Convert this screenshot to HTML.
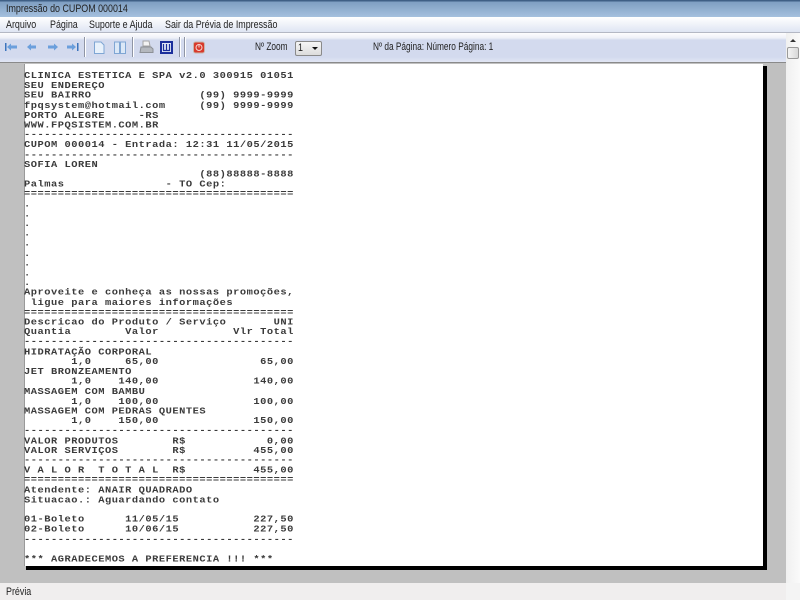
<!DOCTYPE html>
<html><head><meta charset="utf-8"><style>
html,body{margin:0;padding:0;width:800px;height:600px;overflow:hidden;background:#f0f0f0}
body{position:relative;font-family:"Liberation Sans",sans-serif;font-size:10px;color:#222}
.a{position:absolute}
.t{position:absolute;white-space:pre;font-size:11px;line-height:12px;transform-origin:0 0;transform:scaleX(.81)}
.n{transform:scaleX(.755)}
pre{position:absolute;left:24px;top:72px;margin:0;font-family:"Liberation Mono",monospace;font-weight:bold;font-size:10.4px;line-height:11.2px;letter-spacing:0.51px;color:#3a3a3a;transform-origin:0 0;transform:scaleY(.88);filter:blur(.25px)}
</style></head><body>
<div class="a" style="left:0;top:0;width:800px;height:17px;background:linear-gradient(#3f5f85 0,#3f5f85 1px,#7f9fc2 2px,#a5c0de 100%)"></div>
<div class="t" style="left:6px;top:3px">Impressão do CUPOM 000014</div>
<div class="a" style="left:0;top:17px;width:800px;height:15px;background:linear-gradient(#fff 0,#f5f7fb 30%,#dfe5f3 100%);border-bottom:1px solid #b4b8c4"></div>
<div class="t" style="left:6px;top:19px">Arquivo</div>
<div class="t" style="left:50px;top:19px">Página</div>
<div class="t" style="left:88.500px;top:19px">Suporte e Ajuda</div>
<div class="t" style="left:165px;top:19px">Sair da Prévia de Impressão</div>
<div class="a" style="left:0;top:33px;width:786px;height:29px;background:linear-gradient(#fdfdfe 0,#eef0f8 5px,#d3daee 7px,#d3daee 24px,#e2e6f3 100%)"></div>
<svg class="a" style="left:0;top:33px" width="215" height="29" viewBox="0 0 215 29">
<g fill="#6b9fdc">
<rect x="5" y="10" width="1.500" height="8" fill="#3b74bd"/><path d="M7 14l4-3.500v2h6v3h-6v2z"/>
<path d="M27 14l4-3.500v2h5v3h-5v2z"/>
<path d="M58 14l-4-3.500v2h-6v3h6v2z"/>
<path d="M76 14l-4-3.500v2h-5v3h5v2z"/><rect x="77" y="10" width="1.500" height="8" fill="#3b74bd"/>
</g>
<rect x="84" y="4" width="1" height="20" fill="#8f95a5"/><rect x="85" y="4" width="1" height="20" fill="#fff"/>
<path d="M94.500 9h6.500l3 3v8.500h-9.500z" fill="#e8f1fb" stroke="#7fa6d4"/>
<path d="M114.500 9h5v11.500h-5zM120.500 9h5v11.500h-5z" fill="#dbe8f7" stroke="#7fa6d4"/>
<rect x="132" y="4" width="1" height="20" fill="#8f95a5"/><rect x="133" y="4" width="1" height="20" fill="#fff"/>
<path d="M143 8h6l1 5h-7z" fill="#f3f3f3" stroke="#a5a5a5"/><path d="M141 14h10l2 2v3.500h-13z" fill="#b4b8be" stroke="#8c9096"/>
<rect x="161" y="9" width="11" height="11" fill="#dfe6f6" stroke="#1b2f9c" stroke-width="2"/>
<path d="M163.500 11v6.500h6v-6.500M166.500 11v6.500" fill="none" stroke="#1b2f9c" stroke-width="1.200"/>
<rect x="179" y="4" width="1" height="20" fill="#8f95a5"/><rect x="180" y="4" width="1" height="20" fill="#fff"/>
<rect x="184" y="4" width="1" height="20" fill="#8f95a5"/><rect x="185" y="4" width="1" height="20" fill="#fff"/>
<rect x="193.500" y="9" width="11" height="11" rx="2" fill="#d8392b" stroke="#c8b4a8"/>
<circle cx="199" cy="14.500" r="3" fill="none" stroke="#f6d6d0"/><path d="M199 11v3.500" stroke="#f6d6d0"/>
</svg>
<div class="t n" style="left:255px;top:41px">Nº Zoom</div>
<div class="a" style="left:295px;top:41px;width:27px;height:15px;box-sizing:border-box;border:1px solid #8a8a8a;border-radius:2px;background:linear-gradient(#f6f6f6,#dcdcdc)"></div>
<div class="t" style="left:298px;top:42px">1</div>
<div class="a" style="left:312px;top:47px;width:0;height:0;border:3px solid transparent;border-top:3px solid #111;border-bottom:0"></div>
<div class="t n" style="left:373px;top:41px">Nº da Página: Número Página: 1</div>

<div class="a" style="left:0;top:62px;width:786px;height:521px;background:#c0c0c0;border-top:1px solid #8a8a8a;box-sizing:border-box"></div>
<div class="a" style="left:26px;top:66px;width:741px;height:504px;background:#000"></div>
<div class="a" style="left:24px;top:64px;width:739px;height:502px;background:#fff;border-left:1px solid #999;box-sizing:border-box"></div>
<pre>CLINICA ESTETICA E SPA v2.0 300915 01051
SEU ENDEREÇO
SEU BAIRRO                (99) 9999-9999
fpqsystem@hotmail.com     (99) 9999-9999
PORTO ALEGRE     -RS
WWW.FPQSISTEM.COM.BR
----------------------------------------
CUPOM 000014 - Entrada: 12:31 11/05/2015
----------------------------------------
SOFIA LOREN
                          (88)88888-8888
Palmas               - TO Cep:
========================================
.
.
.
.
.
.
.
.
.
Aproveite e conheça as nossas promoções,
 ligue para maiores informações
========================================
Descricao do Produto / Serviço       UNI
Quantia        Valor           Vlr Total
----------------------------------------
HIDRATAÇÃO CORPORAL
       1,0     65,00               65,00
JET BRONZEAMENTO
       1,0    140,00              140,00
MASSAGEM COM BAMBU
       1,0    100,00              100,00
MASSAGEM COM PEDRAS QUENTES
       1,0    150,00              150,00
----------------------------------------
VALOR PRODUTOS        R$            0,00
VALOR SERVIÇOS        R$          455,00
----------------------------------------
V A L O R  T O T A L  R$          455,00
========================================
Atendente: ANAIR QUADRADO
Situacao.: Aguardando contato

01-Boleto      11/05/15           227,50
02-Boleto      10/06/15           227,50
----------------------------------------

*** AGRADECEMOS A PREFERENCIA !!! ***</pre>

<div class="a" style="left:786px;top:33px;width:14px;height:550px;background:linear-gradient(90deg,#f0f0f0,#fafafa)"></div>
<div class="a" style="left:790px;top:39px;width:0;height:0;border:3px solid transparent;border-bottom:3px solid #333;border-top:0"></div>
<div class="a" style="left:787px;top:47px;width:12px;height:12px;box-sizing:border-box;border:1px solid #9a9a9a;border-radius:2px;background:linear-gradient(90deg,#f4f4f4,#d8d8d8)"></div>
<div class="a" style="left:790px;top:592px;width:0;height:0;border:3px solid transparent;border-top:3px solid #333;border-bottom:0"></div>
<div class="a" style="left:0;top:583px;width:786px;height:17px;background:#f0eeee"></div>
<div class="a" style="left:786px;top:583px;width:14px;height:17px;background:#f4f4f4"></div>
<div class="t" style="left:6px;top:586px">Prévia</div>
</body></html>
